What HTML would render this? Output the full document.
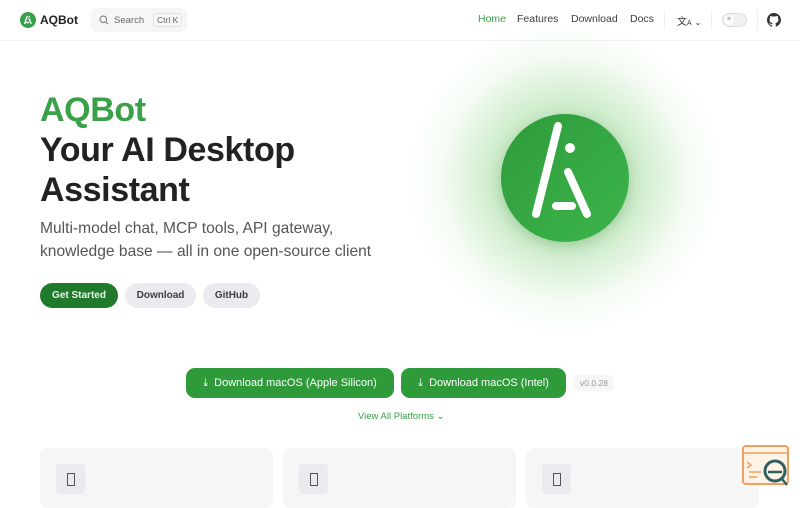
<!DOCTYPE html>
<html><head><meta charset="utf-8"><style>
*{margin:0;padding:0;box-sizing:border-box}
body{width:800px;height:500px;overflow:hidden;background:#fff;font-family:"Liberation Sans",sans-serif;position:relative;color:#3c3c43}
.a{position:absolute}
.nav a{position:absolute;top:13px;font-size:10.5px;color:#3c3c43}
.btn{position:absolute;border-radius:14px;font-size:10px;font-weight:bold;display:flex;align-items:center;justify-content:center}
.card{position:absolute;top:448px;width:233px;height:60px;background:#f6f6f7;border-radius:8px}
.card i{position:absolute;left:16px;top:16px;width:29px;height:30px;background:#ebebef;border-radius:4px}
.card i:after{content:"";position:absolute;left:11px;top:9px;width:6px;height:11px;border:1.2px solid #555}
</style></head><body>
<svg class="a" style="left:20px;top:12px" width="16" height="16" viewBox="0 0 16 16"><circle cx="8" cy="8" r="8" fill="#35a048"/><path d="M7 4.5 4.8 11.5M9 6.5 11 11.5M6.8 10.5h1.6" stroke="#fff" stroke-width="1.4" stroke-linecap="round"/><circle cx="9.3" cy="4.6" r=".8" fill="#fff"/></svg>
<div class="a" style="left:40px;top:13px;font-size:12px;font-weight:bold;color:#222">AQBot</div>
<div class="a" style="left:91px;top:8px;width:96px;height:24px;background:#f6f6f7;border-radius:6px"></div>
<svg class="a" style="left:99px;top:15px" width="10" height="10" viewBox="0 0 10 10"><circle cx="4.3" cy="4.3" r="3.3" stroke="#777" fill="none"/><path d="M6.8 6.8 9 9" stroke="#777"/></svg>
<div class="a" style="left:114px;top:15px;font-size:9.5px;color:#666">Search</div>
<div class="a" style="left:153px;top:13px;font-size:8.5px;color:#666;border:1px solid #e2e2e3;border-radius:3px;padding:1px 3px">Ctrl K</div>
<div class="nav">
<a style="left:478px;color:#3aa04a">Home</a><a style="left:517px">Features</a><a style="left:571px">Download</a><a style="left:630px">Docs</a></div>
<div class="a" style="left:664px;top:10px;width:1px;height:20px;background:#eee"></div>
<div class="a" style="left:677px;top:13px;font-size:10px;color:#333">文<span style="font-size:7px">A</span> <span style="font-size:8px">⌄</span></div>
<div class="a" style="left:711px;top:10px;width:1px;height:20px;background:#eee"></div>
<div class="a" style="left:722px;top:13px;width:25px;height:14px;border-radius:7px;background:#f1f1f2;border:1px solid #ddd"></div>
<div class="a" style="left:724px;top:15px;width:10px;height:10px;border-radius:5px;background:#fff;font-size:7px;color:#999;text-align:center;line-height:10px">✳</div>
<div class="a" style="left:757px;top:10px;width:1px;height:20px;background:#eee"></div>
<svg class="a" style="left:767px;top:13px" width="14" height="14" viewBox="0 0 16 16"><path fill="#333" d="M8 0C3.58 0 0 3.580 0 8c0 3.54 2.29 6.53 5.47 7.59.4.07.55-.17.55-.38v-1.33c-2.230.48-2.700-1.070-2.700-1.070-.36-.92-.89-1.17-.89-1.17-.73-.5.05-.49.05-.49.8.06 1.23.83 1.23.83.72 1.22 1.87.87 2.33.66.07-.52.28-.87.51-1.07-1.78-.2-3.65-.89-3.65-3.95 0-.87.31-1.59.82-2.15-.08-.2-.36-1.02.08-2.12 0 0 .67-.21 2.2.82A7.6 7.6 0 0 1 8 3.8c.68 0 1.36.09 2 .27 1.53-1.04 2.2-.82 2.2-.82.44 1.1.16 1.92.08 2.12.51.56.82 1.27.82 2.15 0 3.07-1.87 3.75-3.65 3.95.29.25.54.73.54 1.48v2.2c0 .21.15.46.55.38A8 8 0 0 0 16 8c0-4.42-3.58-8-8-8z"/></svg>
<div class="a" style="left:0;top:40px;width:800px;height:1px;background:#f2f2f2"></div>
<div class="a" style="left:40px;top:90px;font-size:34px;font-weight:bold;line-height:40px;color:#222;letter-spacing:-.4px"><span style="color:#3aa04a">AQBot</span><br>Your AI Desktop<br>Assistant</div>
<div class="a" style="left:40px;top:217px;font-size:15.6px;line-height:23px;color:#555">Multi-model chat, MCP tools, API gateway,<br>knowledge base — all in one open-source client</div>
<div class="btn" style="left:40px;top:283px;width:78px;height:25px;background:#1f7a2c;color:#e8f5e8">Get Started</div>
<div class="btn" style="left:125px;top:283px;width:71px;height:25px;background:#ebebef;color:#3c3c43">Download</div>
<div class="btn" style="left:203px;top:283px;width:57px;height:25px;background:#ebebef;color:#3c3c43">GitHub</div>
<div class="a" style="left:405px;top:18px;width:320px;height:320px;border-radius:50%;background:radial-gradient(circle,rgba(70,180,70,.5) 0%,rgba(110,200,100,.3) 35%,rgba(180,230,170,.12) 55%,rgba(255,255,255,0) 70%)"></div>
<div class="a" style="left:501px;top:114px;width:128px;height:128px;border-radius:50%;background:linear-gradient(135deg,#2f9a3c,#3cb54a);box-shadow:0 4px 14px rgba(30,120,40,.25)"></div>
<svg class="a" style="left:501px;top:114px" width="128" height="128" viewBox="0 0 128 128"><g stroke="#fff" stroke-width="8" stroke-linecap="round"><path d="M57 12 35 100M67 58 86 100M55 92h16"/></g><circle cx="69" cy="34" r="5" fill="#fff"/></svg>
<div class="btn" style="left:186px;top:368px;width:208px;height:30px;background:#2e9a3a;color:#fff;font-weight:normal;font-size:11px;border-radius:9px">⤓&nbsp; Download macOS (Apple Silicon)</div>
<div class="btn" style="left:401px;top:368px;width:165px;height:30px;background:#2e9a3a;color:#fff;font-weight:normal;font-size:11px;border-radius:9px">⤓&nbsp; Download macOS (Intel)</div>
<div class="btn" style="left:574px;top:375px;width:40px;height:16px;background:#f6f6f7;color:#999;font-weight:normal;font-size:8.5px;border-radius:4px">v0.0.28</div>
<div class="a" style="left:358px;top:411px;font-size:9.5px;color:#3aa04a">View All Platforms ⌄</div>
<div class="card" style="left:40px"><i></i></div>
<div class="card" style="left:283px"><i></i></div>
<div class="card" style="left:526px"><i></i></div>
<svg class="a" style="left:741px;top:445px" width="50" height="45" viewBox="0 0 50 45"><rect x="2" y="1" width="45" height="38" rx="3" fill="#fff3e6" stroke="#f0a060" stroke-width="2"/><path d="M2 8h45M6 17l4 3-4 3M8 27h12M8 32h8" stroke="#f0a060" stroke-width="1.5" fill="none"/><circle cx="34" cy="26" r="10" fill="none" stroke="#2f5f5f" stroke-width="3"/><path d="M27 27h14M41 34l5 6" stroke="#2f5f5f" stroke-width="2.5"/></svg>
</body></html>
